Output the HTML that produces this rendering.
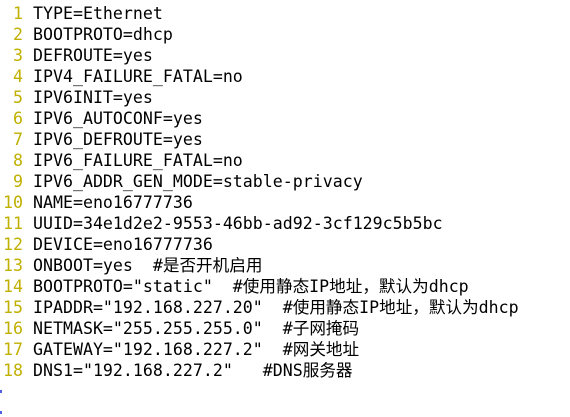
<!DOCTYPE html>
<html><head><meta charset="utf-8"><style>
html,body{margin:0;padding:0;background:#fff;}
body{width:570px;height:417px;overflow:hidden;position:relative;}
.l{position:absolute;left:0;height:21px;line-height:21px;font-family:"DejaVu Sans Mono","Noto Sans CJK SC",monospace;font-size:16.6px;color:#000;white-space:pre;}
.n{display:inline-block;width:23px;text-align:right;color:#c0b000;margin-right:10px;}
.m{position:absolute;left:0;width:2px;height:3px;background:#5060e0;}
</style></head><body>
<div class="l" style="top:3px"><span class="n">1</span>TYPE=Ethernet</div>
<div class="l" style="top:24px"><span class="n">2</span>BOOTPROTO=dhcp</div>
<div class="l" style="top:45px"><span class="n">3</span>DEFROUTE=yes</div>
<div class="l" style="top:66px"><span class="n">4</span>IPV4_FAILURE_FATAL=no</div>
<div class="l" style="top:87px"><span class="n">5</span>IPV6INIT=yes</div>
<div class="l" style="top:108px"><span class="n">6</span>IPV6_AUTOCONF=yes</div>
<div class="l" style="top:129px"><span class="n">7</span>IPV6_DEFROUTE=yes</div>
<div class="l" style="top:150px"><span class="n">8</span>IPV6_FAILURE_FATAL=no</div>
<div class="l" style="top:171px"><span class="n">9</span>IPV6_ADDR_GEN_MODE=stable-privacy</div>
<div class="l" style="top:192px"><span class="n">10</span>NAME=eno16777736</div>
<div class="l" style="top:213px"><span class="n">11</span>UUID=34e1d2e2-9553-46bb-ad92-3cf129c5b5bc</div>
<div class="l" style="top:234px"><span class="n">12</span>DEVICE=eno16777736</div>
<div class="l" style="top:255px"><span class="n">13</span>ONBOOT=yes  #是否开机启用</div>
<div class="l" style="top:276px"><span class="n">14</span>BOOTPROTO="static"  #使用静态IP地址，默认为dhcp</div>
<div class="l" style="top:297px"><span class="n">15</span>IPADDR="192.168.227.20"  #使用静态IP地址，默认为dhcp</div>
<div class="l" style="top:318px"><span class="n">16</span>NETMASK="255.255.255.0"  #子网掩码</div>
<div class="l" style="top:339px"><span class="n">17</span>GATEWAY="192.168.227.2"  #网关地址</div>
<div class="l" style="top:360px"><span class="n">18</span>DNS1="192.168.227.2"   #DNS服务器</div>
<div class="m" style="top:390px"></div>
<div class="m" style="top:411px"></div>
</body></html>
